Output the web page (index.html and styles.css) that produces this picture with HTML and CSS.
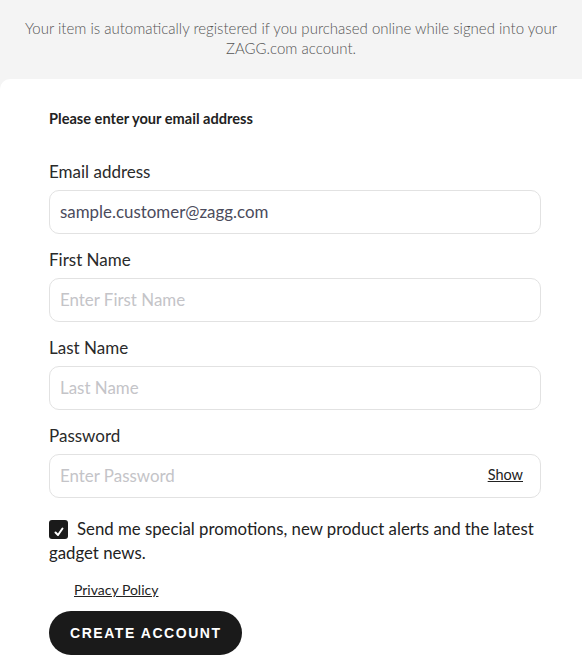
FILE: index.html
```html
<!DOCTYPE html>
<html lang="en">
<head>
    <meta charset="UTF-8">
    <title>Register your product</title>
    <link rel="stylesheet" href="styles.css">
</head>
<body>

    <div class="notice">
        Your item is automatically registered if you purchased online while signed into your ZAGG.com account.
    </div>

    <div class="card">
        <h3 class="card-title">Please enter your email address</h3>

        <div class="field">
            <label class="field-label" for="email">Email address</label>
            <input class="field-input filled" id="email" type="text" value="sample.customer@zagg.com">
        </div>

        <div class="field">
            <label class="field-label" for="first-name">First Name</label>
            <input class="field-input" id="first-name" type="text" placeholder="Enter First Name">
        </div>

        <div class="field">
            <label class="field-label" for="last-name">Last Name</label>
            <input class="field-input" id="last-name" type="text" placeholder="Last Name">
        </div>

        <div class="field">
            <label class="field-label" for="password">Password</label>
            <div class="password-wrap">
                <input class="field-input" id="password" type="password" placeholder="Enter Password">
                <a class="show-link" href="#">Show</a>
            </div>
        </div>

        <p class="opt-in">
            <span class="check"><svg width="12" height="12" viewBox="0 0 12 12"><path d="M2.5 6.5 L5 9 L9.5 2.5" fill="none" stroke="#fff" stroke-width="2" stroke-linecap="round" stroke-linejoin="round"/></svg></span>Send me special promotions, new product alerts and the latest gadget news.
        </p>

        <a class="privacy" href="#">Privacy Policy</a>

        <button class="btn" type="button">CREATE ACCOUNT</button>
    </div>

</body>
</html>
```

FILE: styles.css
```css
/* 页面 */
body {
    margin: 0;
    background-color: #f4f4f4;
    font-family: Lato, "Noto Sans", sans-serif;
    color: #222;
}

/* 顶部提示 */
.notice {
    padding: 18px 20px 21px;
    text-align: center;
    font-size: 15px;
    line-height: 20px;
    font-weight: 300;
    color: #555;
}

/* 卡片 */
.card {
    background-color: #fff;
    border-top-left-radius: 10px;
    padding: 31px 41px 12px 49px;
}

.card-title {
    margin: 0 0 33px;
    font-size: 14.6px;
    line-height: 18px;
    font-weight: 700;
    color: #222;
}

/* 表单项 */
.field {
    margin-bottom: 15px;
}

.field-label {
    display: block;
    font-size: 17px;
    line-height: 22px;
    color: #2a2a2a;
    margin-bottom: 7px;
}

.field-input {
    display: block;
    width: 100%;
    height: 44px;
    box-sizing: border-box;
    border: 1px solid #e2e2e2;
    border-radius: 10px;
    padding: 0 10px 1px;
    font-family: inherit;
    font-size: 16.9px;
    color: #4b4b5c;
    outline: none;
}

.field-input::placeholder {
    color: #c4c4c8;
}

.password-wrap {
    position: relative;
}

.show-link {
    position: absolute;
    right: 18px;
    top: 12px;
    font-size: 14.5px;
    color: #222;
}

/* 订阅勾选 */
.opt-in {
    margin: 19px 0 15px;
    font-size: 16.8px;
    line-height: 24px;
    color: #222;
}

.check {
    display: inline-block;
    width: 19px;
    height: 19px;
    background-color: #1a1a1a;
    border-radius: 3px;
    vertical-align: -3px;
    margin-right: 9px;
    text-align: center;
}

.check svg {
    margin-top: 3px;
}

.privacy {
    display: block;
    margin-left: 25px;
    font-size: 14px;
    line-height: 20px;
    color: #222;
}

/* 按钮 */
.btn {
    margin-top: 11px;
    height: 44px;
    padding: 0 20px 0 21px;
    border: none;
    border-radius: 22px;
    background-color: #1a1a1a;
    color: #fff;
    font-family: "Liberation Sans", Arial, sans-serif;
    font-size: 14px;
    font-weight: 700;
    letter-spacing: 1.55px;
    cursor: pointer;
}
```
